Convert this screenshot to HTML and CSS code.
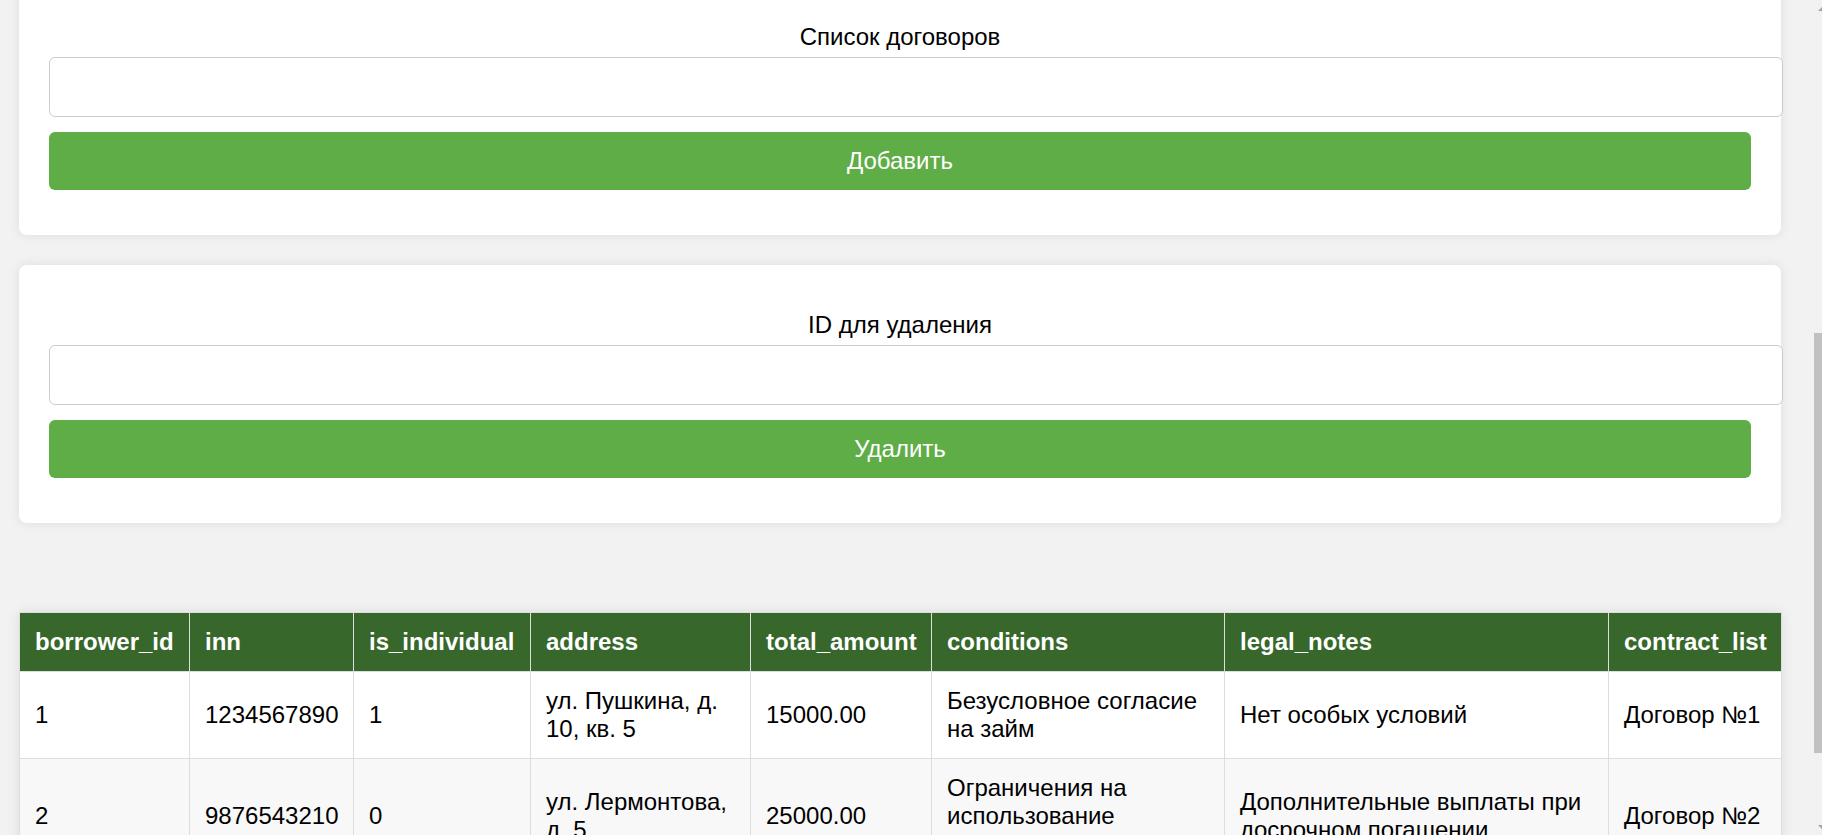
FILE: index.html
```html
<!DOCTYPE html>
<html lang="ru">
<head>
<meta charset="utf-8">
<title>Заёмщики</title>
<link rel="stylesheet" href="styles.css">
</head>
<body>
<div class="viewport">
  <main class="page">
    <section class="card card-first">
      <label class="field-label" for="contracts">Список договоров</label>
      <input class="field-input" id="contracts" type="text">
      <button class="btn" type="button">Добавить</button>
    </section>

    <section class="card">
      <label class="field-label" for="delete-id">ID для удаления</label>
      <input class="field-input" id="delete-id" type="text">
      <button class="btn" type="button">Удалить</button>
    </section>

    <div class="table-wrap">
      <table class="data-table">
        <colgroup>
          <col class="c-id"><col class="c-inn"><col class="c-ind"><col class="c-addr">
          <col class="c-amount"><col class="c-cond"><col class="c-notes"><col class="c-list">
        </colgroup>
        <thead>
          <tr>
            <th>borrower_id</th><th>inn</th><th>is_individual</th><th>address</th>
            <th>total_amount</th><th>conditions</th><th>legal_notes</th><th>contract_list</th>
          </tr>
        </thead>
        <tbody>
          <tr>
            <td>1</td><td>1234567890</td><td>1</td><td>ул. Пушкина, д. 10, кв. 5</td>
            <td>15000.00</td><td>Безусловное согласие на займ</td><td>Нет особых условий</td><td>Договор №1</td>
          </tr>
          <tr>
            <td>2</td><td>9876543210</td><td>0</td><td>ул. Лермонтова, д. 5</td>
            <td>25000.00</td><td>Ограничения на использование средств</td><td>Дополнительные выплаты при досрочном погашении</td><td>Договор №2</td>
          </tr>
          <tr>
            <td>3</td><td>1122334455</td><td>1</td><td>ул. Гоголя, д. 3</td>
            <td>10000.00</td><td>Без ограничений</td><td>Нет особых условий</td><td>Договор №3</td>
          </tr>
        </tbody>
      </table>
    </div>
  </main>

  <div class="scrollbar">
    <div class="sb-btn"><span class="sb-arrow-up"></span></div>
    <div class="sb-track"><div class="sb-thumb"></div></div>
    <div class="sb-btn sb-btn-down"><span class="sb-arrow-down"></span></div>
  </div>
</div>
</body>
</html>
```

FILE: styles.css
```css
html, body {
  margin: 0;
  padding: 0;
  height: 100%;
  overflow: hidden;
}

body {
  font-family: "Liberation Sans", Arial, sans-serif;
  font-size: 24px;
  color: #000;
  background: #f2f2f2;
}

.viewport {
  display: flex;
  height: 835px;
  overflow: hidden;
}

.page {
  flex: 1;
  min-width: 0;
  padding-left: 19px;
  overflow: hidden;
}

.card {
  box-sizing: border-box;
  width: 1762px;
  background: #fff;
  border-radius: 8px;
  box-shadow: 0 0 12px rgba(0, 0, 0, 0.09);
  padding: 46px 30px 45px;
  margin-top: 30px;
}

.card-first {
  margin-top: -23px;
}

.field-label {
  display: block;
  text-align: center;
  font-size: 24px;
  line-height: normal;
  margin-bottom: 6px;
}

.field-input {
  display: block;
  width: 100%;
  height: 28px;
  padding: 15px;
  border: 1px solid #cccccc;
  border-radius: 6px;
  font-family: inherit;
  font-size: 24px;
  background: #fff;
  outline: none;
}

.btn {
  display: block;
  box-sizing: border-box;
  width: 100%;
  height: 58px;
  margin-top: 15px;
  padding: 0 15px;
  border: none;
  border-radius: 6px;
  background: #5fad47;
  color: #fff;
  font-family: inherit;
  font-size: 24px;
  cursor: pointer;
}

.table-wrap {
  margin-top: 89px;
  width: 1762px;
}

.data-table {
  width: 1762px;
  border-collapse: collapse;
  table-layout: fixed;
  background: #fff;
  box-shadow: 0 0 12px rgba(0, 0, 0, 0.09);
}

.c-id { width: 170px; }
.c-inn { width: 164px; }
.c-ind { width: 177px; }
.c-addr { width: 220px; }
.c-amount { width: 181px; }
.c-cond { width: 293px; }
.c-notes { width: 384px; }
.c-list { width: 173px; }

.data-table th,
.data-table td {
  border: 1px solid #dddddd;
  padding: 15px;
  text-align: left;
  font-size: 24px;
  line-height: 28px;
  vertical-align: middle;
  white-space: normal;
}

.data-table th {
  background: #37672b;
  color: #fff;
  font-weight: bold;
  line-height: 27.6px;
  white-space: nowrap;
}

.data-table tbody tr:nth-child(even) td {
  background: #f8f8f8;
}

/* fake browser scrollbar (partially visible at the right edge) */
.scrollbar {
  width: 8px;
  flex: none;
  display: flex;
  flex-direction: column;
  background: #f1f1f1;
  overflow: hidden;
}

.sb-btn {
  height: 17px;
  flex: none;
  display: flex;
  align-items: center;
}

.sb-arrow-up {
  width: 0;
  height: 0;
  margin-left: 4px;
  border-left: 4px solid transparent;
  border-right: 4px solid transparent;
  border-bottom: 4px solid #a3a3a3;
}

.sb-arrow-down {
  width: 0;
  height: 0;
  margin-left: 4px;
  border-left: 4px solid transparent;
  border-right: 4px solid transparent;
  border-top: 4px solid #a3a3a3;
}

.sb-track {
  flex: 1;
}

.sb-thumb {
  margin-top: 316px;
  height: 420px;
  background: #c1c1c1;
}
```
